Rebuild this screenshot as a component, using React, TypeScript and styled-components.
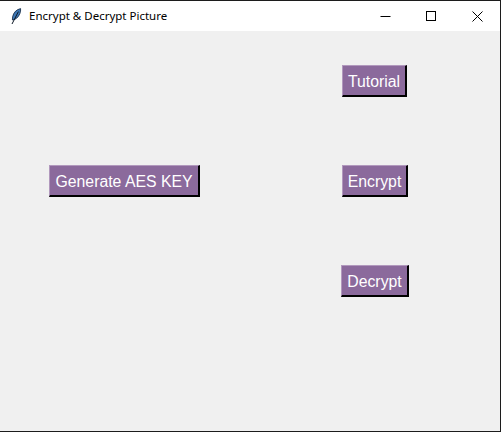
import React from "react";
import styled, { createGlobalStyle } from "styled-components";

const GlobalStyle = createGlobalStyle`
  html, body {
    margin: 0;
    padding: 0;
    background: #f0f0f0;
  }
`;

const Window = styled.div`
  box-sizing: border-box;
  width: 501px;
  height: 432px;
  display: flex;
  flex-direction: column;
  background: #f0f0f0;
  border: 1px solid #1c1c1c;
  border-left: 0;
`;

const TitleBar = styled.div`
  height: 30px;
  display: flex;
  align-items: center;
  background: #ffffff;
  padding-left: 9px;
`;

const Feather = styled.svg`
  width: 16px;
  height: 17px;
  margin-right: 4px;
`;

const Title = styled.span`
  flex: 1;
  padding-bottom: 2px;
  font-family: "Noto Sans", Arial, sans-serif;
  font-size: 11.5px;
  color: #000000;
`;

const WindowControl = styled.div`
  width: 46px;
  height: 30px;
  display: flex;
  align-items: center;
  justify-content: center;
`;

const ControlIcon = styled.svg`
  width: 11px;
  height: 11px;
  fill: none;
  stroke: #000000;
  stroke-width: 1;
`;

const Content = styled.main`
  flex: 1;
  display: grid;
  grid-template-columns: 151px 68px;
  grid-auto-rows: 32px;
  column-gap: 141px;
  row-gap: 68px;
  padding: 34px 0 0 49px;
`;

const ActionButton = styled.button<{ $column: number; $row: number; $width: number; $inset?: number }>`
  grid-column: ${(p) => p.$column};
  grid-row: ${(p) => p.$row};
  justify-self: start;
  margin-left: ${(p) => p.$inset ?? 0}px;
  box-sizing: border-box;
  width: ${(p) => p.$width}px;
  height: 32px;
  padding: 2px 0 0;
  white-space: nowrap;
  background: #8b6a9c;
  color: #ffffff;
  font-family: "Liberation Sans", Arial, sans-serif;
  font-size: 15.8px;
  border-style: solid;
  border-width: 1px 2px 2px 1px;
  border-color: #b198bd #000000 #000000 #b198bd;
`;

export default function App() {
  return (
    <Window>
      <GlobalStyle />
      <TitleBar>
        <Feather viewBox="0 0 16 17">
          <path d="M11.6 0.6 C7.6 1.4 4.4 4.6 3.6 8.8 L3.4 12 C6.6 11.8 9.4 9.2 10.8 5.8 C11.5 4 11.8 2.2 11.6 0.6 Z" fill="#3f78b5" stroke="#10253d" strokeWidth="0.8" />
          <path d="M9.4 3.6 L3 16" fill="none" stroke="#0b1624" strokeWidth="1" />
        </Feather>
        <Title>Encrypt &amp; Decrypt Picture</Title>
        <WindowControl>
          <ControlIcon viewBox="0 0 11 11">
            <path d="M0.5 5.5 H10.5" />
          </ControlIcon>
        </WindowControl>
        <WindowControl>
          <ControlIcon viewBox="0 0 11 11">
            <rect x="0.5" y="0.5" width="9" height="9" />
          </ControlIcon>
        </WindowControl>
        <WindowControl>
          <ControlIcon viewBox="0 0 11 11">
            <path d="M0.5 0.5 L10.5 10.5 M10.5 0.5 L0.5 10.5" />
          </ControlIcon>
        </WindowControl>
      </TitleBar>
      <Content>
        <ActionButton $column={2} $row={1} $width={65} $inset={1}>Tutorial</ActionButton>
        <ActionButton $column={1} $row={2} $width={151}>Generate AES KEY</ActionButton>
        <ActionButton $column={2} $row={2} $width={66} $inset={1}>Encrypt</ActionButton>
        <ActionButton $column={2} $row={3} $width={68}>Decrypt</ActionButton>
      </Content>
    </Window>
  );
}
